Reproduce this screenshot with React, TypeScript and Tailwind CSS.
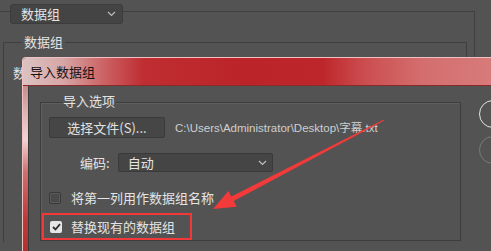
import React from "react";

const font = { fontFamily: '"Noto Sans CJK SC", "Noto Sans", sans-serif' };

function Chevron({ className }: { className?: string }) {
  return (
    <svg width="9" height="6" viewBox="0 0 9 6" className={className}>
      <path d="M1 1 L4.5 4.5 L8 1" fill="none" stroke="#bdbdbd" strokeWidth="1.2" />
    </svg>
  );
}

function Arrow() {
  const tip = [213, 209];
  const tail = [384, 120];
  const dx = tail[0] - tip[0];
  const dy = tail[1] - tip[1];
  const len = Math.hypot(dx, dy);
  const u = [dx / len, dy / len];
  const n = [-u[1], u[0]];
  const hl = 22;
  const hw = 9;
  const base = [tip[0] + u[0] * hl, tip[1] + u[1] * hl];
  const sw = 2.6;
  const tw = 0.4;
  const p = (x: number, y: number) => `${x.toFixed(1)},${y.toFixed(1)}`;
  const pts = [
    p(tip[0], tip[1]),
    p(base[0] + n[0] * hw, base[1] + n[1] * hw),
    p(base[0] + n[0] * sw, base[1] + n[1] * sw),
    p(tail[0] + n[0] * tw, tail[1] + n[1] * tw),
    p(tail[0] - n[0] * tw, tail[1] - n[1] * tw),
    p(base[0] - n[0] * sw, base[1] - n[1] * sw),
    p(base[0] - n[0] * hw, base[1] - n[1] * hw),
  ].join(" ");
  return (
    <svg className="absolute left-0 top-0 pointer-events-none" width="491" height="251">
      <polygon points={pts} fill="#f23a3a" />
    </svg>
  );
}

export default function App() {
  return (
    <div
      className="relative w-[491px] h-[251px] overflow-hidden bg-[#535353]"
      style={font}
    >
      {/* background panel */}
      <div className="mt-[11px] mr-[16px] h-[300px] border-t border-r border-[#404040] text-[#e4e4e4]">
        <div className="-mt-[8px] ml-[10px] w-[113px] h-[20px] rounded-[3px] border border-[#3c3c3c] bg-[#444444] flex items-center justify-between pl-[10px] pr-[6px]">
          <span className="text-[13px] leading-[16px]">数据组</span>
          <Chevron />
        </div>
        <div className="mt-[18px] ml-[3px] mr-[7px] h-[200px] border-t border-l border-r border-[#3f3f3f]">
          <div className="-mt-[9px] ml-[18px] w-fit px-[2px] bg-[#535353] text-[13px] leading-[16px]">
            数据组
          </div>
          <div className="mt-[15px] ml-[9px] text-[13px] leading-[16px]">数</div>
        </div>
      </div>

      {/* dialog window */}
      <div className="absolute left-[22px] top-[57px] w-[500px] h-[220px] flex flex-col rounded-tl-[4px] overflow-hidden border-t border-l border-[#eec2c2]">
        <div className="h-[28px] shrink-0 flex items-center pl-[7px] bg-[linear-gradient(90deg,#dcc2c2_0%,#d8a6a6_8%,#cc6466_16%,#bf2e32_24%,#bb2428_45%,#bd262a_60%,#cb4c4e_68%,#d46e6e_80%,#d98080_100%)] border-b border-[#8a2a2a]">
          <span className="text-[13px] leading-[16px] text-[#1a1212]">导入数据组</span>
        </div>
        <div className="flex flex-1 text-[#e4e4e4]">
          <div className="w-[5px] shrink-0 bg-[linear-gradient(180deg,#c98c8c_0%,#e0b4b4_14%,#f2d4d4_28%,#d07070_45%,#bc3a3a_70%,#a82a2a_100%)]" />
          <div className="flex-1 flex border-l border-[#3a3a3a] bg-[#535353]">
            {/* group box */}
            <div className="ml-[11px] mt-[16px] w-[421px] h-[139px] border border-[#3d3d3d] shadow-[inset_1px_1px_0_#5e5e5e] flex flex-col">
              <div className="-mt-[10px] ml-[21px] w-fit px-[1px] bg-[#535353] text-[13px] leading-[16px]">
                导入选项
              </div>
              <div className="mt-[8px] ml-[8px] flex items-center">
                <div className="w-[116px] h-[21px] rounded-[2px] border border-[#3a3a3a] bg-[#464646] flex items-center justify-center text-[13px] leading-[16px] text-[#e2e2e2]">
                  选择文件(S)...
                </div>
                <span
                  className="ml-[10px] text-[11.5px] leading-[16px] text-[#cfcfcf]"
                  style={{ fontFamily: '"Liberation Sans", "Noto Sans CJK SC", sans-serif' }}
                >
                  C:\Users\Administrator\Desktop\字幕.txt
                </span>
              </div>
              <div className="mt-[15px] ml-[39px] flex items-center">
                <span className="text-[13px] leading-[16px]">编码:</span>
                <div className="ml-[8px] w-[155px] h-[19px] rounded-[2px] border border-[#3a3a3a] bg-[#454545] flex items-center justify-between pl-[9px] pr-[5px]">
                  <span className="text-[13px] leading-[16px]">自动</span>
                  <Chevron />
                </div>
              </div>
              <div className="mt-[18px] ml-[8px] flex items-center">
                <div className="w-[12px] h-[12px] rounded-[2px] border border-[#3a3a3a] bg-[#4a4a4a] shadow-[inset_0_0_0_1px_#5a5a5a]" />
                <span className="ml-[10px] text-[13px] leading-[16px]">将第一列用作数据组名称</span>
              </div>
              <div className="mt-[7px] ml-[1px] w-[150px] h-[27px] border-2 border-[#f23838] flex items-center pl-[6px]">
                <div className="w-[12px] h-[12px] rounded-[2px] bg-[#e6e6e6] flex items-center justify-center">
                  <svg width="9" height="8" viewBox="0 0 9 8">
                    <path d="M1 4 L3.5 6.5 L8 1.2" fill="none" stroke="#2e2e2e" strokeWidth="1.8" />
                  </svg>
                </div>
                <span className="ml-[9px] text-[13px] leading-[16px]">替换现有的数据组</span>
              </div>
            </div>
            {/* right buttons */}
            <div className="ml-[18px] mt-[14px] flex flex-col gap-[8px]">
              <div className="w-[28px] h-[28px] rounded-full border-[1.5px] border-[#e2e2e2]" />
              <div className="w-[28px] h-[28px] rounded-full border-[1.5px] border-[#7a7a7a]" />
            </div>
          </div>
        </div>
      </div>

      <Arrow />
    </div>
  );
}
